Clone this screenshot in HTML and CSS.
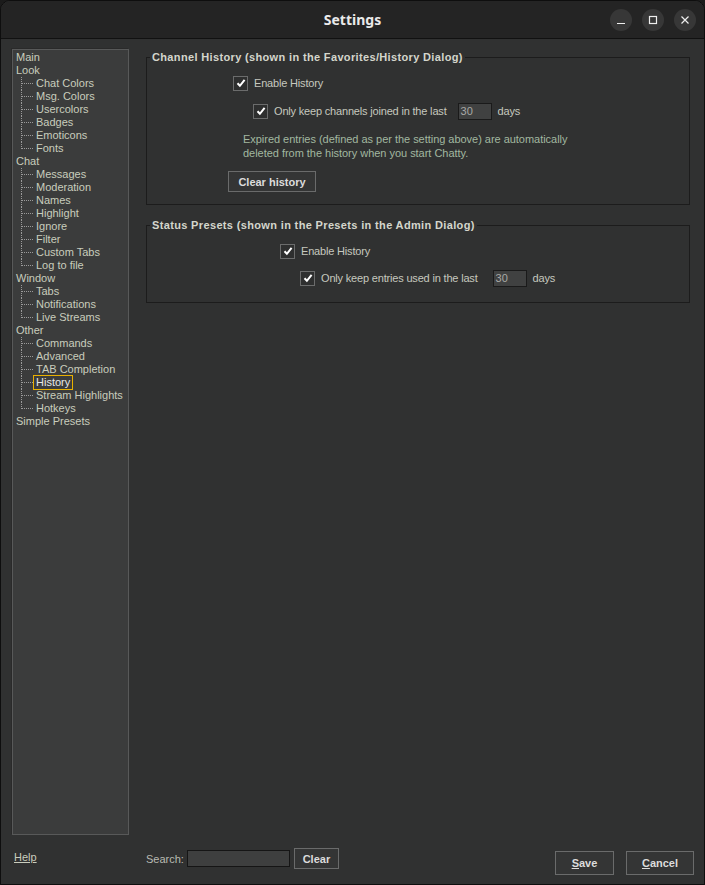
FILE: index.html
```html
<!DOCTYPE html>
<html>
<head>
<meta charset="utf-8">
<link rel="stylesheet" href="styles.css">
</head>
<body>
<div class="window">
  <header class="titlebar">
    <span class="title">Settings</span>
    <div class="wm-buttons">
      <span class="wm-btn"><svg width="10" height="10" viewBox="0 0 10 10"><path d="M1 8.5h8" stroke="#eee" stroke-width="1.2"/></svg></span>
      <span class="wm-btn"><svg width="10" height="10" viewBox="0 0 10 10"><rect x="1.5" y="1.5" width="7" height="7" fill="none" stroke="#eee" stroke-width="1.2"/></svg></span>
      <span class="wm-btn"><svg width="10" height="10" viewBox="0 0 10 10"><path d="M1.5 1.5l7 7M8.5 1.5l-7 7" stroke="#eee" stroke-width="1.2"/></svg></span>
    </div>
  </header>

  <div class="main">
    <nav class="tree">
      <ul class="root">
        <li>Main</li>
        <li>Look
          <ul class="kids">
            <li>Chat Colors</li><li>Msg. Colors</li><li>Usercolors</li><li>Badges</li><li>Emoticons</li><li>Fonts</li>
          </ul>
        </li>
        <li>Chat
          <ul class="kids">
            <li>Messages</li><li>Moderation</li><li>Names</li><li>Highlight</li><li>Ignore</li><li>Filter</li><li>Custom Tabs</li><li>Log to file</li>
          </ul>
        </li>
        <li>Window
          <ul class="kids">
            <li>Tabs</li><li>Notifications</li><li>Live Streams</li>
          </ul>
        </li>
        <li>Other
          <ul class="kids">
            <li>Commands</li><li>Advanced</li><li>TAB Completion</li><li><span class="sel">History</span></li><li>Stream Highlights</li><li>Hotkeys</li>
          </ul>
        </li>
        <li>Simple Presets</li>
      </ul>
    </nav>

    <section class="content">
      <fieldset class="group g1">
        <legend>Channel History (shown in the Favorites/History Dialog)</legend>
        <div class="row r1"><span class="cb"><svg width="10" height="10" viewBox="0 0 10 10"><path d="M1.5 5.2l2.4 2.6L8.6 1.8" fill="none" stroke="#fff" stroke-width="2"/></svg></span>Enable History</div>
        <div class="row r2"><span class="cb"><svg width="10" height="10" viewBox="0 0 10 10"><path d="M1.5 5.2l2.4 2.6L8.6 1.8" fill="none" stroke="#fff" stroke-width="2"/></svg></span>Only keep channels joined in the last<span class="num">30</span><span class="days">days</span></div>
        <p class="desc">Expired entries (defined as per the setting above) are automatically<br>deleted from the history when you start Chatty.</p>
        <button class="btn clear-hist">Clear history</button>
      </fieldset>

      <fieldset class="group g2">
        <legend>Status Presets (shown in the Presets in the Admin Dialog)</legend>
        <div class="row r3"><span class="cb"><svg width="10" height="10" viewBox="0 0 10 10"><path d="M1.5 5.2l2.4 2.6L8.6 1.8" fill="none" stroke="#fff" stroke-width="2"/></svg></span>Enable History</div>
        <div class="row r4"><span class="cb"><svg width="10" height="10" viewBox="0 0 10 10"><path d="M1.5 5.2l2.4 2.6L8.6 1.8" fill="none" stroke="#fff" stroke-width="2"/></svg></span>Only keep entries used in the last<span class="num">30</span><span class="days">days</span></div>
      </fieldset>
    </section>
  </div>

  <footer class="footer">
    <a class="help">Help</a>
    <div class="search">
      <span class="search-label">Search:</span>
      <span class="search-field"></span>
      <button class="btn clear">Clear</button>
    </div>
    <div class="actions">
      <button class="btn big save"><u>S</u>ave</button>
      <button class="btn big cancel"><u>C</u>ancel</button>
    </div>
  </footer>
</div>
</body>
</html>
```

FILE: styles.css
```css
* { box-sizing: border-box; }
html, body { margin: 0; padding: 0; background: #1b1b1b; }
body { width: 705px; height: 885px; overflow: hidden; font-family: "Liberation Sans", Arial, sans-serif; font-size: 11px; }

.window {
  width: 705px; height: 885px;
  background: #303131;
  border: 1px solid #0e0e0e;
  border-radius: 10px 10px 0 0;
  display: flex; flex-direction: column;
  overflow: hidden;
}

.titlebar {
  height: 38px; flex: none;
  background: #242424;
  border-bottom: 1px solid #111;
  display: flex; align-items: center; justify-content: center;
  position: relative;
}
.title { color: #eaeaea; font-family: "Noto Sans", "DejaVu Sans", sans-serif; font-weight: bold; font-size: 14px; }
.wm-buttons { position: absolute; right: 8px; top: 8px; display: flex; gap: 10px; }
.wm-btn { width: 22px; height: 22px; border-radius: 50%; background: #373737; display: flex; align-items: center; justify-content: center; }

.main { flex: 1; display: flex; padding: 10px 14px 0 11px; gap: 17px; min-height: 0; }

.tree {
  width: 117px; height: 786px; flex: none;
  background: #3b3c3c;
  border: 1px solid #585959;
  box-shadow: -1px -1px 0 #2a2a2a;
  padding: 1px 0 0 3px;
  color: #c9cdbd;
}
.tree ul { list-style: none; margin: 0; padding: 0; }
.root > li { line-height: 13px; }
.kids { margin-left: 5px !important; }
.kids > li { position: relative; padding-left: 15px; line-height: 13px; }
.kids > li::before {
  content: ""; position: absolute; left: 0; top: 0; height: 13px;
  border-left: 1px dotted #9a9a9a;
}
.kids > li:last-child::before { height: 7px; }
.kids > li::after {
  content: ""; position: absolute; left: 1px; top: 6px; width: 11px;
  border-top: 1px dotted #9a9a9a;
}
.sel { display: inline-block; border: 1px solid #e8b000; margin-left: -3px; padding: 0 2px; line-height: 11px; height: 15px; padding-top: 1px; margin-top: -1px; margin-bottom: -1px; color: #e8e8e8; }

.content { width: 544px; flex: none; padding-top: 1px; }

.group { margin: 0; padding: 0; border: 1px solid #1c1c1c; color: #c9cbc2; min-width: 0; }
.group legend { font-weight: bold; line-height: 14px; padding: 0 2px 0 2px; margin-left: 3px; color: #d4d6cc; letter-spacing: 0.35px; }
.g1 { padding-bottom: 12px; }
.g2 { margin-top: 13px; padding-bottom: 16px; }

.row { display: flex; align-items: center; height: 14px; line-height: 14px; color: #c6c8bf; letter-spacing: -0.18px; }
.cb { width: 15px; height: 15px; border: 1px solid #6b6c6c; background: #2e2f2f; display: inline-flex; align-items: center; justify-content: center; margin-right: 6px; flex: none; }
.r1 { margin: 12px 0 0 86px; }
.r2 { margin: 13px 0 0 106px; height: 16px; }
.r3 { margin: 12px 0 0 133px; }
.r4 { margin: 12px 0 0 153px; height: 16px; }
.num { width: 34px; height: 17px; border: 1px solid #1a1a1a; background: #404141; color: #a8aaa6; padding-left: 2px; line-height: 15px; margin-left: 11px; letter-spacing: 0; }
.r4 .num { margin-left: 15px; }
.days { margin-left: 6px; }

.desc { margin: 13px 0 0 96px; line-height: 14px; color: #a2b8a0; letter-spacing: -0.03px; }
.btn {
  font-family: "Liberation Sans", Arial, sans-serif; font-size: 11px; font-weight: bold;
  background: #343535; color: #dcdcdc;
  border: 1px solid #6a6b6b; padding: 0; cursor: default;
}
.clear-hist { display: block; margin: 11px 0 0 81px; width: 88px; height: 21px; }

.footer { height: 46px; flex: none; display: flex; padding: 0 10px 0 13px; }
.help { width: 132px; color: #c9cdbd; text-decoration: underline; margin-top: 13px; line-height: 13px; }
.search { display: flex; align-items: center; margin-top: 10px; height: 21px; color: #b8bab2; }
.search-label { margin-right: 3px; }
.search-field { width: 103px; height: 17px; background: #3e3f3f; border: 1px solid #151515; }
.clear { width: 45px; height: 21px; margin-left: 4px; }
.actions { margin-left: auto; display: flex; gap: 12px; margin-top: 13px; }
.big { height: 24px; }
.save { width: 59px; }
.cancel { width: 68px; }
```
